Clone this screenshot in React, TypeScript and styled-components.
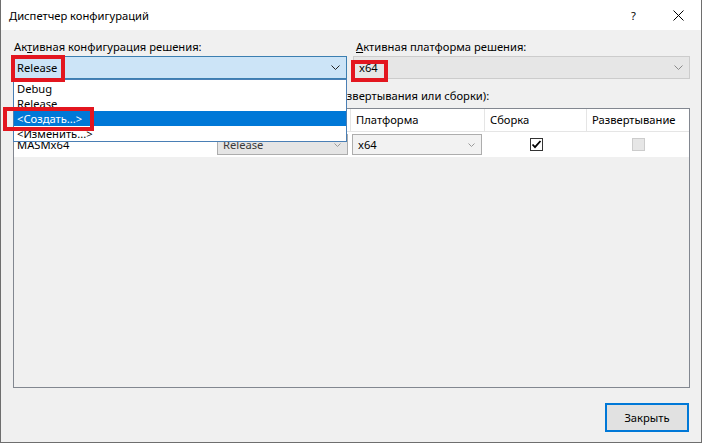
import React from "react";
import styled, { createGlobalStyle } from "styled-components";

const GlobalStyle = createGlobalStyle`
  html, body { margin: 0; padding: 0; background: #f0f0f0; }
  body { font-family: "Noto Sans", "Liberation Sans", sans-serif; font-size: 11.2px; color: #000; }
  * { box-sizing: border-box; }
`;

const Window = styled.div`
  position: relative;
  width: 702px;
  height: 443px;
  display: flex;
  flex-direction: column;
  background: #f0f0f0;
  border: 1px solid #6e6e6e;
  border-top: none;
  overflow: hidden;
`;

const TitleBar = styled.div`
  height: 30px;
  flex: none;
  background: #fff;
  display: flex;
  align-items: center;
  padding-left: 8px;
`;

const Title = styled.div`
  flex: 1;
`;

const TitleButton = styled.div`
  width: 45px;
  height: 30px;
  display: flex;
  align-items: center;
  justify-content: center;
`;

const Content = styled.div`
  flex: 1;
  display: flex;
  flex-direction: column;
  padding: 9px 11px 10px 12px;
  min-height: 0;
`;

const TopRow = styled.div`
  display: grid;
  grid-template-columns: 334px 1fr;
  column-gap: 6px;
`;

const Field = styled.div`
  position: relative;
  display: flex;
  flex-direction: column;
  gap: 1px;
`;

const Label = styled.div<{ $indent?: number }>`
  line-height: 16px;
  height: 16px;
  padding-left: ${(p) => p.$indent ?? 1}px;
  white-space: nowrap;
`;

const Combo = styled.div<{ $variant: "focus" | "flat" | "cell" | "cellLight" }>`
  height: ${(p) => (p.$variant === "focus" || p.$variant === "flat" ? 23 : 21)}px;
  display: flex;
  align-items: center;
  justify-content: space-between;
  padding: 0 6px 0 ${(p) => (p.$variant === "focus" ? 3 : 5)}px;
  border: 1px solid
    ${(p) =>
      p.$variant === "focus" ? "#3c7fb1" : p.$variant === "flat" ? "#cccccc" : "#adadad"};
  background: ${(p) =>
    p.$variant === "focus" ? "#cce4f7" : p.$variant === "flat" ? "#e6e6e6" : p.$variant === "cell" ? "#e5e5e5" : "#f2f2f2"};
  color: ${(p) => (p.$variant === "cell" ? "#3a3a3a" : "#000")};
`;

const Dropdown = styled.div`
  position: absolute;
  top: 100%;
  left: 0;
  width: 100%;
  background: #fff;
  border: 1px solid #4a7fb5;
  padding: 1px 0 0 0;
  z-index: 5;
`;

const DropItem = styled.div<{ $active?: boolean }>`
  height: 15px;
  line-height: 15px;
  padding-left: 3px;
  background: ${(p) => (p.$active ? "#0078d7" : "transparent")};
  color: ${(p) => (p.$active ? "#fff" : "#000")};
`;

const ContextLabel = styled(Label)`
  margin-top: 9px;
  margin-bottom: 4px;
`;

const Table = styled.div`
  flex: 1;
  border: 1px solid #828790;
  background: #f0f0f0;
  min-height: 0;
`;

const Grid = styled.div`
  display: grid;
  grid-template-columns: 202px 135px 134px 102px 1fr;
`;

const HeadCell = styled.div<{ $last?: boolean }>`
  height: 23px;
  line-height: 22px;
  background: #fff;
  border-bottom: 1px solid #e5e5e5;
  border-right: ${(p) => (p.$last ? "none" : "1px solid #e5e5e5")};
  padding-left: 5px;
  white-space: nowrap;
  overflow: hidden;
`;

const Cell = styled.div<{ $center?: boolean }>`
  height: 25px;
  background: #fff;
  display: flex;
  align-items: center;
  justify-content: ${(p) => (p.$center ? "center" : "flex-start")};
  padding: 0 ${(p) => (p.$center ? 0 : 2)}px 0 ${(p) => (p.$center ? 0 : 3)}px;
`;

const ComboCell = styled(Cell)`
  padding: 0 3px 0 1px;
  & > * { flex: 1; }
`;

const CheckBox = styled.div<{ $disabled?: boolean }>`
  width: 13px;
  height: 13px;
  border: 1px solid ${(p) => (p.$disabled ? "#cccccc" : "#333333")};
  background: ${(p) => (p.$disabled ? "#e6e6e6" : "#fff")};
  display: flex;
  align-items: center;
  justify-content: center;
`;

const Footer = styled.div`
  display: flex;
  justify-content: flex-end;
  margin-top: 15px;
  padding-right: 1px;
`;

const Button = styled.div`
  width: 84px;
  height: 29px;
  border: 2px solid #0078d7;
  background: #e1e1e1;
  display: flex;
  align-items: center;
  justify-content: center;
`;

const Marker = styled.div`
  position: absolute;
  border: 4px solid #e3161f;
  pointer-events: none;
  z-index: 10;
`;

const Chevron = ({ color = "#000" }: { color?: string }) => (
  <svg width="9" height="5" viewBox="0 0 9 5">
    <path d="M0.5 0.5 L4.5 4.5 L8.5 0.5" fill="none" stroke={color} strokeWidth="1" />
  </svg>
);

const SmallChevron = ({ color = "#9a9a9a" }: { color?: string }) => (
  <svg width="7" height="4" viewBox="0 0 7 4">
    <path d="M0.5 0.5 L3.5 3.5 L6.5 0.5" fill="none" stroke={color} strokeWidth="1" />
  </svg>
);

const Check = () => (
  <svg width="11" height="11" viewBox="0 0 11 11">
    <path d="M1.5 5.5 L4 8.2 L9.5 2" fill="none" stroke="#000" strokeWidth="1.8" />
  </svg>
);

const CloseIcon = () => (
  <svg width="11" height="11" viewBox="0 0 11 11">
    <path d="M0.5 0.5 L10.5 10.5 M10.5 0.5 L0.5 10.5" stroke="#000" strokeWidth="1" />
  </svg>
);

export default function App() {
  return (
    <>
      <GlobalStyle />
      <Window>
        <TitleBar>
          <Title>Диспетчер конфигураций</Title>
          <TitleButton>?</TitleButton>
          <TitleButton>
            <CloseIcon />
          </TitleButton>
        </TitleBar>
        <Content>
          <TopRow>
            <Field>
              <Label>
                Ак<u>т</u>ивная конфигурация решения:
              </Label>
              <Combo $variant="focus">
                <span>Release</span>
                <Chevron color="#222" />
              </Combo>
              <Dropdown>
                <DropItem>Debug</DropItem>
                <DropItem>Release</DropItem>
                <DropItem $active>&lt;Создать...&gt;</DropItem>
                <DropItem>&lt;Изменить...&gt;</DropItem>
              </Dropdown>
            </Field>
            <Field>
              <Label $indent={3}>
                <u>А</u>ктивная платформа решения:
              </Label>
              <Combo $variant="flat">
                <span>x64</span>
                <Chevron color="#8a8a8a" />
              </Combo>
            </Field>
          </TopRow>
          <ContextLabel>
            Контексты проекта (проверьте конфигурации проекта для развертывания или сборки):
          </ContextLabel>
          <Table>
            <Grid>
              <HeadCell>Проект</HeadCell>
              <HeadCell>Конфигурация</HeadCell>
              <HeadCell>Платформа</HeadCell>
              <HeadCell>Сборка</HeadCell>
              <HeadCell $last>Развертывание</HeadCell>
              <Cell>MASMx64</Cell>
              <ComboCell>
                <Combo $variant="cell">
                  <span>Release</span>
                  <SmallChevron />
                </Combo>
              </ComboCell>
              <ComboCell>
                <Combo $variant="cellLight">
                  <span>x64</span>
                  <SmallChevron />
                </Combo>
              </ComboCell>
              <Cell $center>
                <CheckBox>
                  <Check />
                </CheckBox>
              </Cell>
              <Cell $center>
                <CheckBox $disabled />
              </Cell>
            </Grid>
          </Table>
          <Footer>
            <Button>Закрыть</Button>
          </Footer>
        </Content>
        <Marker style={{ left: 10, top: 55, width: 54, height: 27 }} />
        <Marker style={{ left: 2, top: 107, width: 91, height: 24 }} />
        <Marker style={{ left: 350, top: 60, width: 37, height: 22 }} />
      </Window>
    </>
  );
}
